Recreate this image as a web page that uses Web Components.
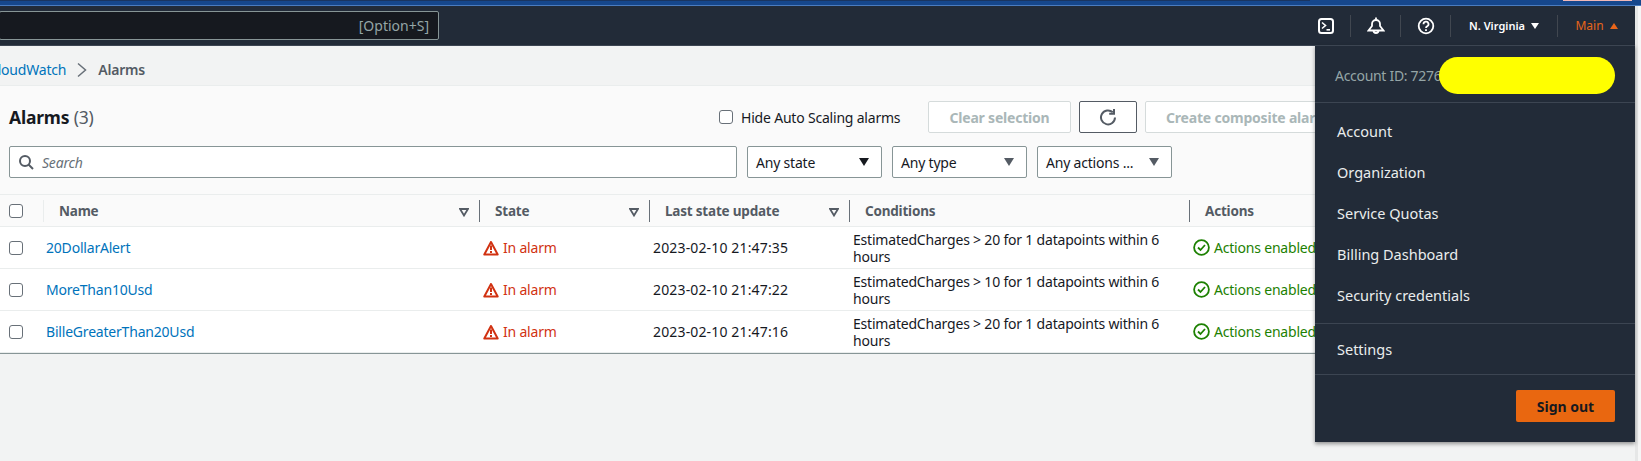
<!DOCTYPE html>
<html>
<head>
<meta charset="utf-8">
<style>
  html, body { margin: 0; padding: 0; height: 100%; overflow: hidden; background: #f2f3f3; }
  body { font-family: "Noto Sans", "Open Sans", sans-serif; font-size: 14px; color: #16191f; letter-spacing: -0.2px; }
</style>
</head>
<body>
<console-page></console-page>

<script>
const ICONS = {
  shell: '<svg width="18" height="18" viewBox="0 0 18 18" fill="none" stroke="#fff" stroke-width="2"><rect x="2" y="2" width="14" height="14" rx="2.5"/><path d="M5 5.500 8.500 8.500 5 11.500" stroke-width="1.600"/><path d="M9.500 12.800H13" stroke-width="1.600"/></svg>',
  bell: '<svg width="18" height="18" viewBox="0 0 18 18" fill="none" stroke="#fff" stroke-width="1.800"><path d="M1.500 13.500h15l-3.500-4.500V7a4 4 0 0 0-8 0v2ZM9 .5v2.500M6.500 13.500a2.500 2.500 0 0 0 5 0Z"/></svg>',
  help: '<svg width="18" height="18" viewBox="0 0 18 18" fill="none" stroke="#fff" stroke-width="1.800"><circle cx="9" cy="9" r="7.300"/><path d="M6.500 7.200a2.500 2.500 0 1 1 3.600 2.200c-.8.400-1.100.9-1.100 1.700M9 12.300V14"/></svg>',
  search: '<svg width="16" height="16" viewBox="0 0 16 16" fill="none" stroke="#545b64" stroke-width="2"><circle cx="7" cy="7" r="5"/><path d="m10.500 10.500 4.500 4.500"/></svg>',
  refresh: '<svg width="18" height="18" viewBox="0 0 18 18" fill="none" stroke="#545b64" stroke-width="2"><path d="M16 9.500A7 7 0 1 1 13.800 4.300"/><path d="M15 1v4.800h-4.800"/></svg>',
  warn: '<svg width="16" height="16" viewBox="0 0 16 16" fill="none" stroke="#d13212" stroke-width="2"><path d="M8 2 1.300 14.500h13.400Z" stroke-linejoin="round"/><path d="M8 5.500v4.500M8 11v2"/></svg>',
  ok: '<svg width="17" height="17" viewBox="0 0 17 17" fill="none" stroke="#1d8102" stroke-width="1.800"><circle cx="8.500" cy="8.500" r="7.400"/><path d="M5 8.500 7.500 11 12 6"/></svg>'
};

class NavItem extends HTMLElement {
  constructor() {
    super();
    this.attachShadow({ mode: 'open' }).innerHTML = `
      <style>
        :host { display: flex; align-items: center; justify-content: center; height: 22px; border-left: 1px solid #414750; box-sizing: border-box; letter-spacing: 0; }
        :host([first]) { border-left: 0; }
      </style>
      <slot></slot>`;
  }
}

class TopNav extends HTMLElement {
  constructor() {
    super();
    this.attachShadow({ mode: 'open' }).innerHTML = `
      <style>
        :host { display: block; }
        .bar { height: 40px; background: #222b38; display: flex; align-items: center; box-sizing: border-box; border-bottom: 1px solid #3c4552; }
        .search { width: 440px; height: 29px; box-sizing: border-box; margin-left: -1px; background: #16191f; border: 1px solid #879596; border-radius: 2px; color: #95a5a6; display: flex; align-items: center; justify-content: flex-end; padding-right: 9px; letter-spacing: 0; }
        .right { margin-left: auto; display: flex; align-items: center; }
        nav-item.i { width: 50px; }
        nav-item.shell { width: 48px; }
        nav-item.region { width: 107px; color: #fff; font-size: 11px; font-weight: 600; gap: 6px; }
        nav-item.acct { width: 78px; color: #e8651a; font-size: 12px; gap: 6px; }
        .tri { width: 0; height: 0; border-left: 4px solid transparent; border-right: 4px solid transparent; }
        .down { border-top: 6px solid #fff; }
        .up { border-bottom: 6px solid #e8651a; }
      </style>
      <div class="bar">
        <div class="search">[Option+S]</div>
        <div class="right">
          <nav-item class="shell" first>${ICONS.shell}</nav-item>
          <nav-item class="i">${ICONS.bell}</nav-item>
          <nav-item class="i">${ICONS.help}</nav-item>
          <nav-item class="region">N. Virginia <span class="tri down"></span></nav-item>
          <nav-item class="acct">Main <span class="tri up"></span></nav-item>
        </div>
      </div>`;
  }
}

class BreadCrumbs extends HTMLElement {
  constructor() {
    super();
    this.attachShadow({ mode: 'open' }).innerHTML = `
      <style>
        :host { display: flex; align-items: center; gap: 11px; height: 39px; box-sizing: border-box; padding-top: 8px; margin-left: -11px; color: #545b64; font-weight: 600; }
        a { color: #0073bb; font-weight: 400; }
        svg { display: block; }
      </style>
      <a>CloudWatch</a>
      <svg width="10" height="16" viewBox="0 0 10 16" fill="none" stroke="#687078" stroke-width="1.500"><path d="m1 1.500 7.500 6.500L1 14.500"/></svg>
      <span>Alarms</span>`;
  }
}

class AwsButton extends HTMLElement {
  constructor() {
    super();
    this.attachShadow({ mode: 'open' }).innerHTML = `
      <style>
        :host { display: flex; align-items: center; justify-content: center; flex: none; height: 32px; box-sizing: border-box; background: #fff; border: 1px solid #d5dbdb; border-radius: 2px; color: #aab7b8; font-weight: 700; white-space: nowrap; }
        :host([active]) { border-color: #545b64; }
      </style>
      <slot></slot>`;
  }
}

class AwsCheck extends HTMLElement {
  constructor() {
    super();
    this.attachShadow({ mode: 'open' }).innerHTML = `
      <style>
        :host { display: block; width: 14px; height: 14px; box-sizing: border-box; flex: none; background: #fff; border: 1px solid #687078; border-radius: 3px; }
      </style>`;
  }
}

class AwsSelect extends HTMLElement {
  constructor() {
    super();
    this.attachShadow({ mode: 'open' }).innerHTML = `
      <style>
        :host { display: flex; align-items: center; justify-content: space-between; flex: none; width: 135px; height: 32px; box-sizing: border-box; padding: 0 12px 0 8px; background: #fff; border: 1px solid #879596; border-radius: 2px; white-space: nowrap; }
        :host([dim]) i { border-top-color: #545b64; }
        i { border-left: 5px solid transparent; border-right: 5px solid transparent; border-top: 8px solid #16191f; }
      </style>
      <slot></slot><i></i>`;
  }
}

class AlarmRow extends HTMLElement {
  constructor() {
    super();
    const name = this.getAttribute('name');
    const time = this.getAttribute('time');
    const cond = this.getAttribute('cond');
    this.attachShadow({ mode: 'open' }).innerHTML = `
      <style>
        :host { display: grid; grid-template-columns: 46px 437px 170px 200px 340px 200px; align-items: center; height: 42px; background: #fff; border-bottom: 1px solid #eaeded; box-sizing: border-box; }
        a { color: #0073bb; }
        .box { padding-left: 9px; }
        .state { display: flex; gap: 4px; align-items: center; color: #d13212; }
        .time { letter-spacing: 0.15px; }
        .cond { line-height: 17px; padding-right: 14px; }
        .act { display: flex; gap: 4px; align-items: center; color: #1d8102; white-space: nowrap; }
        svg { flex: none; }
      </style>
      <div class="box"><aws-check></aws-check></div>
      <a>${name}</a>
      <div class="state">${ICONS.warn}In alarm</div>
      <div class="time">${time}</div>
      <div class="cond">${cond}</div>
      <div class="act">${ICONS.ok}Actions enabled</div>`;
  }
}

class AlarmTable extends HTMLElement {
  constructor() {
    super();
    const sort = '<svg width="10" height="10" viewBox="0 0 10 10" fill="none" stroke="#545b64" stroke-width="1.800"><path d="M1 2h8L5 8.500Z"/></svg>';
    this.attachShadow({ mode: 'open' }).innerHTML = `
      <style>
        :host { display: block; border-bottom: 1px solid #879596; }
        .head { display: grid; grid-template-columns: 43px 436px 170px 200px 340px 200px; height: 33px; box-sizing: border-box; background: #fafafa; border-top: 1px solid #eaeded; border-bottom: 1px solid #eaeded; font-weight: 700; font-size: 13.5px; color: #545b64; align-items: center; }
        .cell { display: flex; align-items: center; justify-content: space-between; height: 22px; padding: 0 10px 0 15px; border-left: 1px solid #687078; box-sizing: border-box; }
        .cell.light { border-left-color: #eaeded; }
        .box { padding-left: 9px; }
        svg { margin-top: 3px; }
      </style>
      <div class="head">
        <div class="box"><aws-check></aws-check></div>
        <div class="cell light"><span>Name</span>${sort}</div>
        <div class="cell"><span>State</span>${sort}</div>
        <div class="cell"><span>Last state update</span>${sort}</div>
        <div class="cell"><span>Conditions</span></div>
        <div class="cell"><span>Actions</span></div>
      </div>
      <slot></slot>`;
  }
}

class AlarmsPanel extends HTMLElement {
  constructor() {
    super();
    this.attachShadow({ mode: 'open' }).innerHTML = `
      <style>
        :host { display: block; background: #fafafa; border-top: 1px solid #eaeded; }
        .title { display: flex; align-items: center; height: 32px; padding: 15px 0 0 9px; }
        h1 { margin: 0; font-size: 17.5px; font-weight: 700; line-height: 32px; color: #16191f; }
        h1 span { font-weight: 400; color: #545b64; }
        .tools { margin-left: auto; display: flex; align-items: center; width: 916px; flex: none; overflow: hidden; }
        .hide { display: flex; align-items: center; gap: 8px; width: 209px; flex: none; white-space: nowrap; }
        .filters { display: flex; gap: 10px; padding: 13px 0 16px 9px; }
        .search { flex: none; width: 728px; height: 32px; box-sizing: border-box; background: #fff; border: 1px solid #879596; border-radius: 2px; display: flex; align-items: center; gap: 8px; padding-left: 8px; color: #687078; font-style: italic; }
      </style>
      <div class="title">
        <h1>Alarms <span>(3)</span></h1>
        <div class="tools">
          <div class="hide"><aws-check></aws-check>Hide Auto Scaling alarms</div>
          <aws-button style="width:143px">Clear selection</aws-button>
          <aws-button active style="width:58px;margin-left:8px">${ICONS.refresh}</aws-button>
          <aws-button style="width:220px;margin-left:8px;justify-content:flex-start;padding-left:20px">Create composite alarm</aws-button>
        </div>
      </div>
      <div class="filters">
        <div class="search">${ICONS.search}Search</div>
        <aws-select>Any state</aws-select>
        <aws-select dim>Any type</aws-select>
        <aws-select dim>Any actions ...</aws-select>
      </div>
      <slot></slot>`;
  }
}

class AccountMenu extends HTMLElement {
  constructor() {
    super();
    this.attachShadow({ mode: 'open' }).innerHTML = `
      <style>
        :host { position: absolute; left: 1315px; top: 45px; width: 320px; height: 397px; background: #222b38; color: #eaeded; font-size: 14.5px; letter-spacing: 0; box-shadow: 0 2px 4px rgba(0,0,0,.4); border-top: 1px solid #3c4552; box-sizing: border-box; }
        .id { display: flex; align-items: center; height: 57px; padding: 2px 0 0 20px; color: #95a5a6; font-size: 14px; letter-spacing: -0.3px; border-bottom: 1px solid #3c4552; box-sizing: border-box; position: relative; }
        .mark { position: absolute; left: 124px; top: 11px; width: 176px; height: 37px; border-radius: 19px; background: #ffff00; }
        .list { padding: 8px 0 7px; border-bottom: 1px solid #3c4552; }
        .item { display: block; height: 41px; line-height: 41px; padding-left: 22px; }
        .one { padding: 5px 0 4px; border-bottom: 1px solid #3c4552; }
        .foot { display: flex; justify-content: flex-end; padding: 15px 20px 0; }
        button { width: 99px; height: 32px; background: #e96710; border: 0; border-radius: 2px; color: #16191f; font: 700 14px "Noto Sans", sans-serif; }
      </style>
      <div class="id">Account ID: 7276<span class="mark"></span></div>
      <div class="list">
        <span class="item">Account</span>
        <span class="item">Organization</span>
        <span class="item">Service Quotas</span>
        <span class="item">Billing Dashboard</span>
        <span class="item">Security credentials</span>
      </div>
      <div class="one"><span class="item">Settings</span></div>
      <div class="foot"><button>Sign out</button></div>`;
  }
}

class ConsolePage extends HTMLElement {
  constructor() {
    super();
    this.attachShadow({ mode: 'open' }).innerHTML = `
      <style>
        :host { display: block; position: relative; height: 461px; overflow: hidden; }
        .strip { height: 5px; border-bottom: 1px solid #4a7cc0; background:
          linear-gradient(#f0b8b8, #f0b8b8) 1563px 0 / 69px 1px no-repeat,
          linear-gradient(#1a3560, #1a3560) 0 0 / 1310px 1px no-repeat,
          #16478c; }
        .body { display: flex; height: 455px; }
        .main { width: 1635px; flex: none; overflow: hidden; }
        .rail { flex: 1; background: linear-gradient(to right, #e6e7e7 3px, #f6f6f6 3px); }
      </style>
      <div class="strip"></div>
      <div class="body">
        <div class="main">
          <top-nav></top-nav>
          <bread-crumbs></bread-crumbs>
          <alarms-panel>
            <alarm-table>
              <alarm-row name="20DollarAlert" time="2023-02-10 21:47:35" cond="EstimatedCharges &gt; 20 for 1 datapoints within 6 hours"></alarm-row>
              <alarm-row name="MoreThan10Usd" time="2023-02-10 21:47:22" cond="EstimatedCharges &gt; 10 for 1 datapoints within 6 hours"></alarm-row>
              <alarm-row name="BilleGreaterThan20Usd" time="2023-02-10 21:47:16" cond="EstimatedCharges &gt; 20 for 1 datapoints within 6 hours"></alarm-row>
            </alarm-table>
          </alarms-panel>
        </div>
        <div class="rail"></div>
      </div>
      <account-menu></account-menu>`;
  }
}

customElements.define('nav-item', NavItem);
customElements.define('top-nav', TopNav);
customElements.define('bread-crumbs', BreadCrumbs);
customElements.define('aws-button', AwsButton);
customElements.define('aws-check', AwsCheck);
customElements.define('aws-select', AwsSelect);
customElements.define('alarm-row', AlarmRow);
customElements.define('alarm-table', AlarmTable);
customElements.define('alarms-panel', AlarmsPanel);
customElements.define('account-menu', AccountMenu);
customElements.define('console-page', ConsolePage);
</script>
</body>
</html>
